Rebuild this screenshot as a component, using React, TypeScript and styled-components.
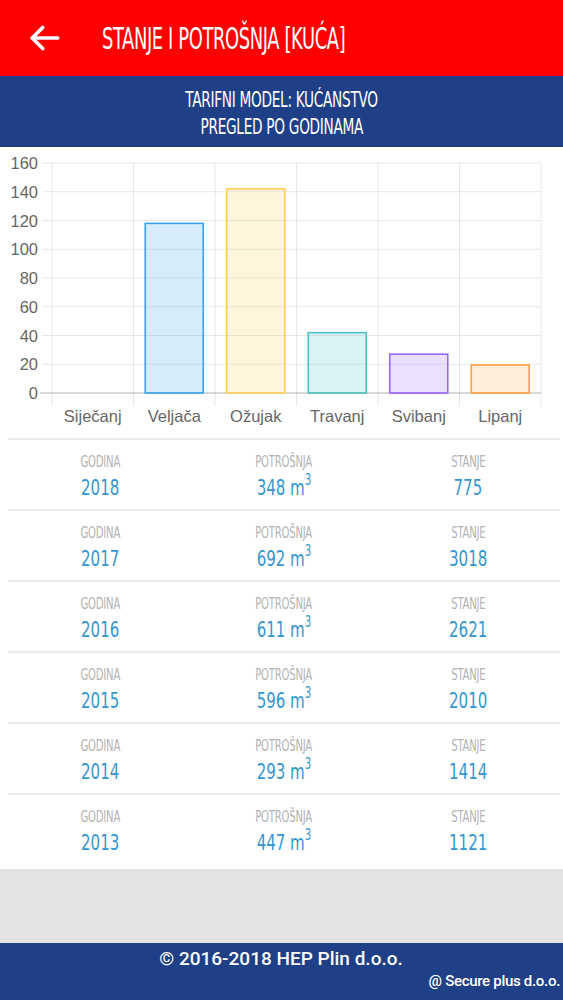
import React from 'react'
import styled, { createGlobalStyle } from 'styled-components'

const GlobalStyle = createGlobalStyle`
  html, body {
    margin: 0;
    padding: 0;
    background: #e4e3e4;
  }
  body {
    font-family: 'Liberation Sans', Arial, sans-serif;
  }
`

const condensed = `'Liberation Sans Narrow', 'DejaVu Sans Condensed', 'Roboto', sans-serif`

const months = ['Siječanj', 'Veljača', 'Ožujak', 'Travanj', 'Svibanj', 'Lipanj']
const values = [0, 118, 142, 42, 27, 19.5]
const colors = [
  ['rgba(255,99,132,0.2)', 'rgb(255,99,132)'],
  ['rgba(54,162,235,0.2)', 'rgb(54,162,235)'],
  ['rgba(255,206,86,0.2)', 'rgb(255,206,86)'],
  ['rgba(75,192,192,0.2)', 'rgb(75,192,192)'],
  ['rgba(153,102,255,0.2)', 'rgb(153,102,255)'],
  ['rgba(255,159,64,0.2)', 'rgb(255,159,64)']
]

const years = [
  { year: 2018, usage: 348, state: 775 },
  { year: 2017, usage: 692, state: 3018 },
  { year: 2016, usage: 611, state: 2621 },
  { year: 2015, usage: 596, state: 2010 },
  { year: 2014, usage: 293, state: 1414 },
  { year: 2013, usage: 447, state: 1121 }
]

const BackArrow = () => (
  <svg width="36" height="36" viewBox="0 0 24 24" fill="none" stroke="#fff" strokeWidth="2.4" strokeLinecap="round" strokeLinejoin="round">
    <path d="M20.5 12H3.5" />
    <path d="M10.5 5l-7 7 7 7" />
  </svg>
)

const Chart = () => {
  const left = 52
  const step = 81.5
  const zero = 245
  const scale = 1.4375
  const barW = 58
  return (
    <svg width="563" height="290" viewBox="0 0 563 290">
      {[0, 20, 40, 60, 80, 100, 120, 140, 160].map(v => {
        const y = zero - v * scale
        return (
          <g key={v}>
            <line x1={v === 0 ? 40 : 42} x2={541} y1={y} y2={y} stroke={v === 0 ? 'rgba(0,0,0,0.3)' : 'rgba(0,0,0,0.09)'} strokeWidth="1" />
            <text x={38} y={y + 6} textAnchor="end" fontSize="16.5" fill="#666" fontFamily="'Liberation Sans', Arial, sans-serif">{v}</text>
          </g>
        )
      })}
      {Array.from({ length: 7 }).map((_, i) => (
        <line key={i} x1={left + i * step} x2={left + i * step} y1={15} y2={258} stroke="rgba(0,0,0,0.09)" strokeWidth="1" />
      ))}
      {values.map((v, i) => {
        if (!v) return null
        const x = left + i * step + (step - barW) / 2
        const h = v * scale
        return (
          <rect key={i} x={x} y={zero - h} width={barW} height={h} fill={colors[i][0]} stroke={colors[i][1]} strokeWidth="1.6" />
        )
      })}
      {months.map((m, i) => (
        <text key={m} x={left + i * step + step / 2} y={274} textAnchor="middle" fontSize="16.5" fill="#666" fontFamily="'Liberation Sans', Arial, sans-serif">{m}</text>
      ))}
    </svg>
  )
}

export default function App() {
  return (
    <>
      <GlobalStyle />
      <Page>
        <TopBar>
          <BackButton><BackArrow /></BackButton>
          <Title>STANJE I POTROŠNJA [KUĆA]</Title>
        </TopBar>
        <SubBar>
          <SubLine>TARIFNI MODEL: KUĆANSTVO</SubLine>
          <SubLine>PREGLED PO GODINAMA</SubLine>
        </SubBar>
        <Content>
          <ChartBox>
            <Chart />
          </ChartBox>
          <YearList>
            {years.map(y => (
              <YearRow key={y.year}>
                <Cell>
                  <Label>GODINA</Label>
                  <Value>{y.year}</Value>
                </Cell>
                <Cell>
                  <Label>POTROŠNJA</Label>
                  <Value>{y.usage} m<sup>3</sup></Value>
                </Cell>
                <Cell>
                  <Label>STANJE</Label>
                  <Value>{y.state}</Value>
                </Cell>
              </YearRow>
            ))}
          </YearList>
        </Content>
        <Spacer />
        <Footer>
          <Copyright>© 2016-2018 HEP Plin d.o.o.</Copyright>
          <Credit>@ Secure plus d.o.o.</Credit>
        </Footer>
      </Page>
    </>
  )
}

const Page = styled.div`
  width: 563px;
  height: 1000px;
  display: flex;
  flex-direction: column;
  background: #e4e3e4;
`

const TopBar = styled.div`
  height: 76px;
  background: #fe0000;
  display: flex;
  align-items: center;
  padding-left: 27px;
  box-sizing: border-box;
`

const BackButton = styled.div`
  width: 36px;
  height: 36px;
  display: flex;
  margin-right: 39px;
`

const Title = styled.h1`
  margin: 0;
  color: #fff;
  font-family: ${condensed};
  font-stretch: condensed;
  font-weight: 500;
  font-size: 30px;
  letter-spacing: -0.6px;
  transform: scaleX(0.665);
  transform-origin: left center;
  white-space: nowrap;
`

const SubBar = styled.div`
  height: 71px;
  background: #1f3f86;
  display: flex;
  flex-direction: column;
  align-items: center;
  justify-content: center;
  padding-top: 2px;
  box-sizing: border-box;
`

const SubLine = styled.div`
  color: #fff;
  font-family: ${condensed};
  font-stretch: condensed;
  font-weight: 500;
  font-size: 22px;
  line-height: 27px;
  letter-spacing: -0.4px;
  transform: scaleX(0.69);
  white-space: nowrap;
`

const Content = styled.div`
  background: #fff;
  padding-bottom: 5px;
`

const ChartBox = styled.div`
  height: 290px;
  padding-top: 1px;
  svg {
    display: block;
  }
`

const YearList = styled.div`
  margin: 0 3px 0 8px;
`

const YearRow = styled.div`
  height: 71px;
  box-sizing: border-box;
  display: grid;
  grid-template-columns: repeat(3, 1fr);
  border-top: 2px solid #ececec;
  padding-top: 13px;
`

const Cell = styled.div`
  display: flex;
  flex-direction: column;
  align-items: center;
`

const Label = styled.div`
  color: #b3b3b3;
  font-family: ${condensed};
  font-stretch: condensed;
  font-size: 16px;
  line-height: 18px;
  letter-spacing: -0.3px;
  transform: scaleX(0.7);
`

const Value = styled.div`
  color: #3596cf;
  font-family: ${condensed};
  font-stretch: condensed;
  font-size: 22px;
  line-height: 28px;
  margin-top: 3px;
  transform: scaleX(0.76);
  white-space: nowrap;
  sup {
    font-size: 15px;
    line-height: 0;
    vertical-align: 10px;
  }
`

const Spacer = styled.div`
  flex: 1;
`

const Footer = styled.div`
  height: 57px;
  background: #1f3f86;
  color: #fff;
  font-family: 'Roboto', 'Liberation Sans', sans-serif;
  display: flex;
  flex-direction: column;
  padding: 5px 3px 0 0;
  box-sizing: border-box;
`

const Copyright = styled.div`
  text-align: center;
  font-size: 19px;
  font-weight: 500;
  line-height: 22px;
  padding-left: 2px;
`

const Credit = styled.div`
  text-align: right;
  font-size: 15px;
  font-weight: 500;
  line-height: 22px;
  letter-spacing: -0.3px;
`
